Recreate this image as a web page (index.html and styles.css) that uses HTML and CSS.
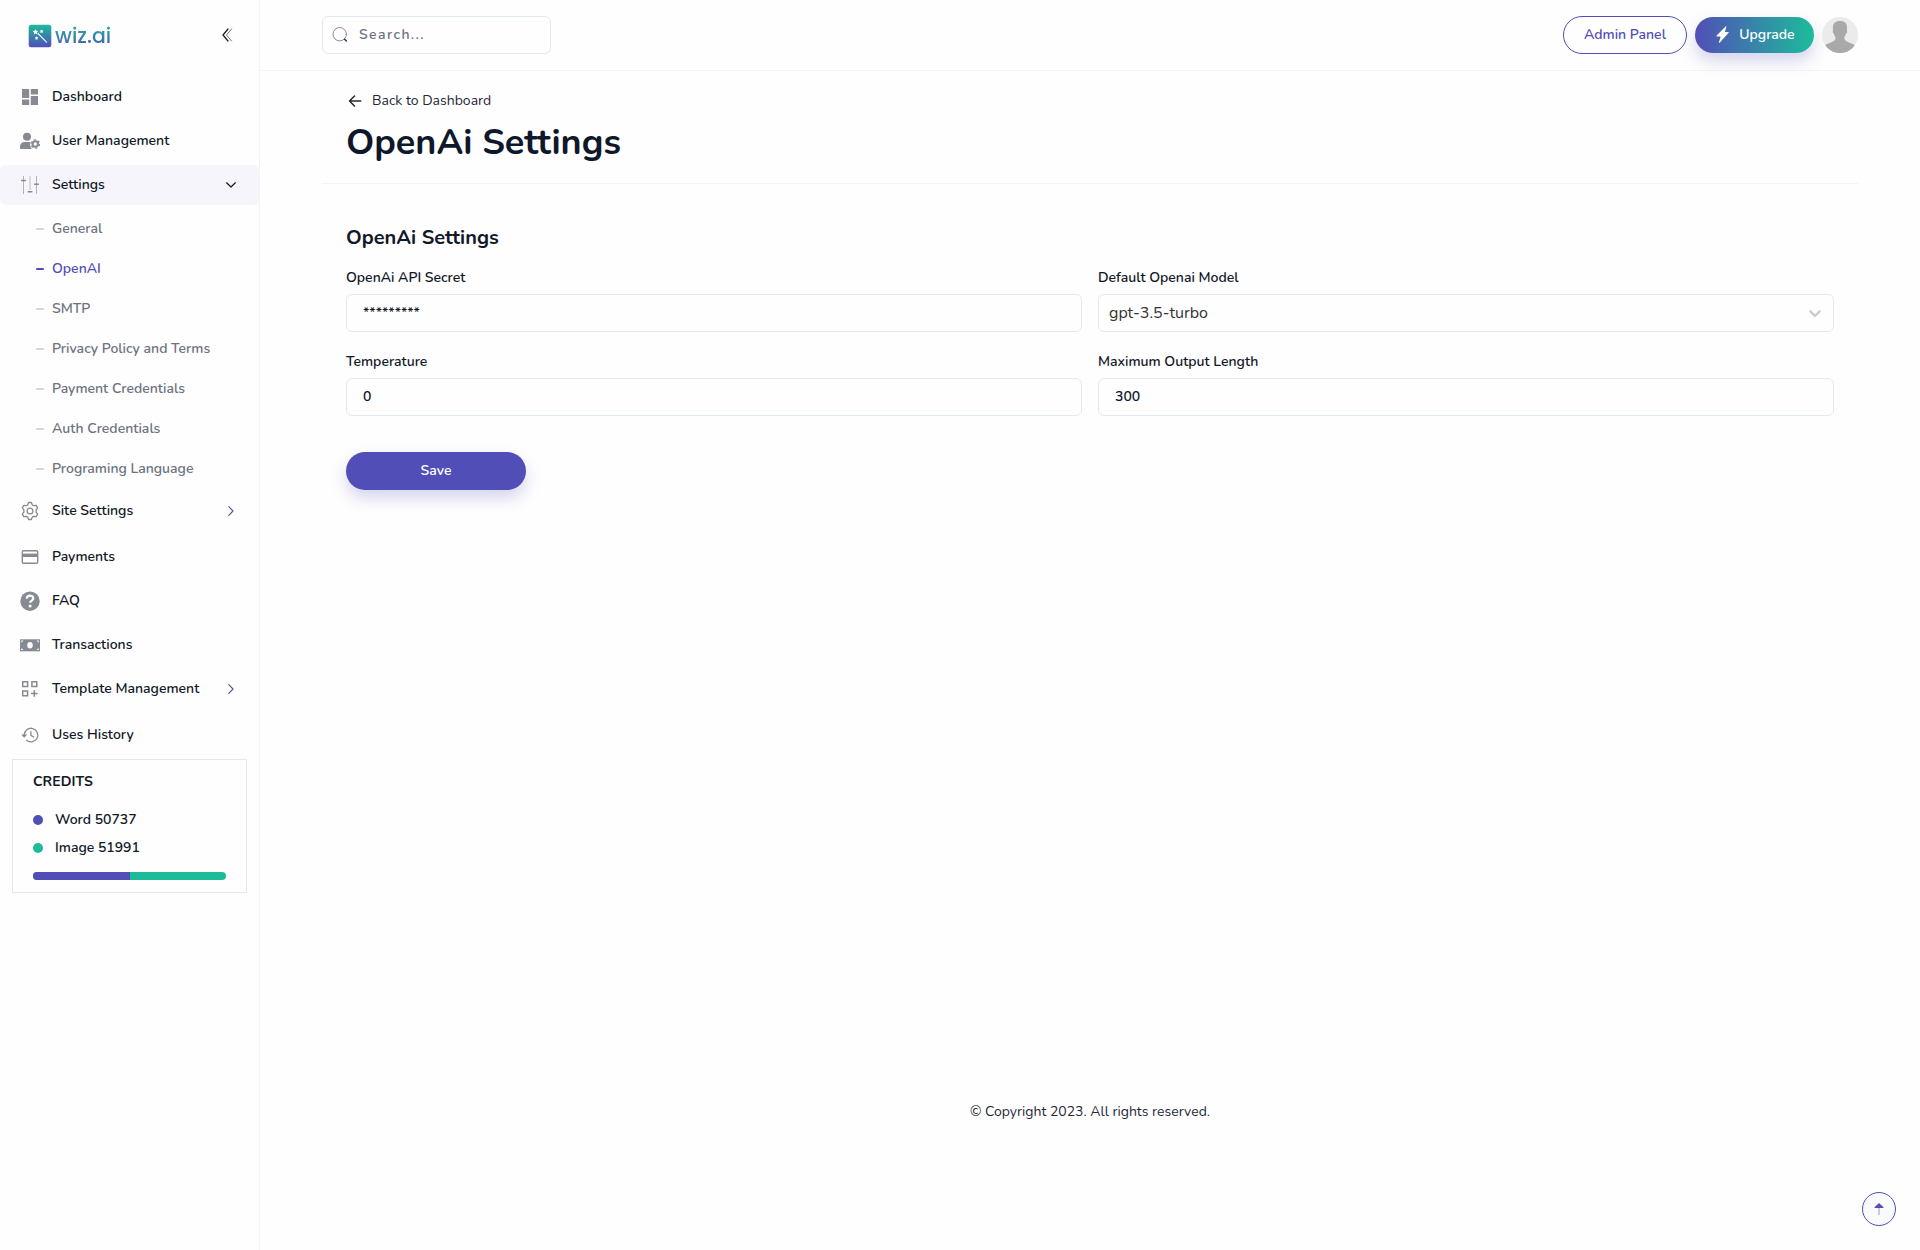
FILE: index.html
```
<!DOCTYPE html>
<html lang="en">
<head>
<meta charset="utf-8">
<title>OpenAi Settings</title>
<link rel="stylesheet" href="styles.css">
</head>
<body>
<aside class="sidebar">
  <div class="brand">
    <a class="logo">
      <svg width="24" height="24" viewBox="0 0 24 24"><defs><linearGradient id="lg" x1="0" y1="0" x2="0" y2="1"><stop offset="0" stop-color="#1cbc9b"/><stop offset="1" stop-color="#524eb7"/></linearGradient></defs><rect x=".7" y=".7" width="22.6" height="22.6" rx="2.5" fill="url(#lg)"/><path d="M10 9.5l8.500 8.700" stroke="#e6f3f5" stroke-width="1.2" stroke-linecap="round"/><path d="M7.500 5.200l.9 1.600 1.800.3-1.200 1.400.2 1.900-1.700-.8-1.700.8.2-1.900-1.200-1.400 1.800-.3zM13.600 5.400l.6 1.100 1.300.3-.9 1 .1 1.300-1.100-.5-1.200.5.1-1.300-.8-1 1.200-.3zM8.600 12.200l.6 1.100 1.200.3-.9 1 .1 1.100-1-.5-1.100.5.1-1.200-.8-.9 1.200-.3z" fill="#fff"/></svg>
      <span class="logo-text">wiz.ai</span>
    </a>
    <svg class="collapse" width="12" height="16" viewBox="0 0 12 16" fill="none" stroke-linecap="round" stroke-linejoin="round"><path d="M6 2L1 8l5 6" stroke="#111827" stroke-width="1.2"/><path d="M9.500 2l-5 6 5 6" stroke="#6b7280" stroke-width="1"/></svg>
  </div>

  <nav class="menu">
    <a class="item"><svg class="ico" viewBox="0 0 20 20" fill="currentColor"><path d="M2 2h7.200v9H2zM10.800 2H18v5.600h-7.200zM2 12.400h7.200V18H2zM10.800 9H18v9h-7.200z"/></svg>Dashboard</a>
    <a class="item"><svg class="ico" viewBox="0 0 20 20" fill="currentColor"><circle cx="7" cy="5.700" r="4"/><path d="M0 17.600v-1.800c0-3 2-4.800 4.400-4.800h4.800c.5 0 .8.1 1.200.2-.4 1.200-.7 3.800 1.400 6.800H.8c-.5 0-.8-.1-.8-.4z"/><circle cx="15.300" cy="13" r="2.700" fill="none" stroke="currentColor" stroke-width="2.100"/><circle cx="15.300" cy="13" r="4.200" fill="none" stroke="currentColor" stroke-width="1.300" stroke-dasharray="2.200 2.200"/></svg>User Management</a>
    <a class="item open"><svg class="ico" viewBox="0 0 20 20" fill="none" stroke="currentColor"><g opacity=".6"><path d="M3.500 1v18M16.500 1v18" stroke-width="1"/><path d="M10 1v14" stroke-width="1.600" opacity=".5"/></g><path d="M1.200 5.500h4.700M14.100 9.300h4.700M7.700 16.800h4.700" stroke-width="1.500"/></svg>Settings<svg class="chev" width="10" height="6" viewBox="0 0 10 6" fill="none" stroke="#111827" stroke-width="1.200" stroke-linecap="round" stroke-linejoin="round"><path d="M.6.8L5 5 9.400.8"/></svg></a>
    <div class="sub">
      <a>General</a>
      <a class="active">OpenAI</a>
      <a>SMTP</a>
      <a>Privacy Policy and Terms</a>
      <a>Payment Credentials</a>
      <a>Auth Credentials</a>
      <a>Programing Language</a>
    </div>
    <a class="item parent"><svg class="ico" viewBox="0 0 20 20" fill="none" stroke="currentColor" stroke-width="1.300" stroke-linejoin="round"><path d="M8.600 1.500h2.800l.9 2.400 1.400.8 2.500-.4 1.500 2.500-1.600 2v2.400l1.600 2-1.500 2.500-2.500-.4-1.400.8-.9 2.400H8.600l-.9-2.400-1.400-.8-2.500.4-1.500-2.500 1.600-2V8.800l-1.600-2 1.500-2.500 2.500.4 1.400-.8z"/><circle cx="10" cy="10" r="2.900"/></svg>Site Settings<svg class="chev side" width="6" height="10" viewBox="0 0 6 10" fill="none" stroke="#475a8c" stroke-width="1.100" stroke-linecap="round" stroke-linejoin="round"><path d="M.8.6L5 5 .8 9.400"/></svg></a>
    <a class="item"><svg class="ico" viewBox="0 0 20 20"><rect x="2.300" y="3.800" width="15.400" height="12.400" rx="1.200" fill="none" stroke="currentColor" stroke-width="1.400"/><path d="M2 6.600h16v3.400H2z" fill="currentColor"/></svg>Payments</a>
    <a class="item"><svg class="ico" viewBox="0 0 20 20"><circle cx="10" cy="10.200" r="9.700" fill="currentColor"/><path d="M6.700 7.600c.2-1.900 1.500-2.900 3.400-2.900s3.200 1.100 3.200 2.700c0 2.100-3.200 2.200-3.200 4.400" fill="none" stroke="#fff" stroke-width="2.200"/><circle cx="10.100" cy="15" r="1.500" fill="#fff"/></svg>FAQ</a>
    <a class="item"><svg class="ico" viewBox="0 0 20 20"><path d="M0 4.300h20v12H0z" fill="currentColor"/><ellipse cx="10" cy="10.300" rx="2.700" ry="3.200" fill="#fff"/><path d="M1.300 7.700V5.600h2.200zM18.700 7.700V5.600h-2.200zM1.300 12.900V15h2.200zM18.700 12.900V15h-2.200z" fill="#fff"/></svg>Transactions</a>
    <a class="item"><svg class="ico" viewBox="0 0 20 20" fill="none" stroke="currentColor" stroke-width="1.500"><path d="M2.700 2.700h4.900v4.900H2.700zM11.900 2.700h4.900v4.900h-4.900zM2.700 11.900h4.900v4.900H2.700zM14.300 11.200v6.600M11 14.500h6.600"/></svg>Template Management<svg class="chev side" width="6" height="10" viewBox="0 0 6 10" fill="none" stroke="#475a8c" stroke-width="1.100" stroke-linecap="round" stroke-linejoin="round"><path d="M.8.6L5 5 .8 9.400"/></svg></a>
    <a class="item history"><svg class="ico" viewBox="0 0 20 20" fill="none" stroke="currentColor" stroke-width="1.300"><path d="M4.200 10.100a6.800 6.800 0 1 1 2 4.800"/><path d="M10.900 6.300v4l3.200 2"/><path d="M1.200 9.500h6l-3 3.300z" fill="currentColor" stroke="none"/></svg>Uses History</a>
  </nav>

  <section class="credits">
    <h4>CREDITS</h4>
    <p><i class="dot"></i>Word 50737</p>
    <p><i class="dot green"></i>Image 51991</p>
    <div class="bar"><span></span></div>
  </section>
</aside>

<div class="page">
  <header class="topbar">
    <div class="search">
      <svg width="16" height="16" viewBox="0 0 16 16" fill="none" stroke-linecap="round"><circle cx="7.700" cy="7.200" r="6.700" stroke="#858b95" stroke-width="1"/><path d="M12.600 12.300l1.800 1.600" stroke="#1f2937" stroke-width="1.400"/></svg>
      <span>Search...</span>
    </div>
    <div class="actions">
      <a class="btn outline">Admin Panel</a>
      <a class="btn upgrade"><svg width="13" height="17" viewBox="0 0 13 17" fill="#fff"><path d="M9.800.2Q10.600 0 10.300.9L8.900 5.900h3c.9 0 1.100.6.5 1.200L3.900 16.400c-.6.500-1.200.2-.9-.5l1.700-5.300H1.200c-.8 0-1-.6-.5-1.200z"/></svg>Upgrade</a>
      <svg class="avatar" width="36" height="36" viewBox="0 0 36 36"><defs><clipPath id="av"><circle cx="18" cy="18" r="18"/></clipPath></defs><g clip-path="url(#av)"><path fill="#ebebeb" d="M0 0h36v36H0z"/><path fill="#a9a9a9" d="M18 4c4.800 0 7 2.400 7 6.500 0 1.200-.1 1.800-.1 2.700.6.6.2 2.800-.8 3.300-.4 1.500-1 2.600-1.700 3.400v1.600c0 2.500 3.600 3.400 9.900 6.200L35 36H1l2.500-8.300c6.300-2.800 9.900-3.700 9.900-6.200v-1.600c-.7-.8-1.300-1.900-1.600-3.400-1-.5-1.400-2.700-.8-3.300 0-.9-.2-1.500-.1-2.700C11 6.400 13.200 4 18 4z"/></g></svg>
    </div>
  </header>

  <main class="content">
    <div class="heading">
      <a class="back"><svg width="14" height="14" viewBox="0 0 14 14" fill="none" stroke="#1f2937" stroke-width="1.500" stroke-linecap="round" stroke-linejoin="round"><path d="M12.700 7H1.500M6.500 2L1.500 7l5 5"/></svg>Back to Dashboard</a>
      <h1>OpenAi Settings</h1>
    </div>
    <form class="settings">
      <h2>OpenAi Settings</h2>
      <div class="grid">
        <label>OpenAi API Secret<span class="field">*********</span></label>
        <label>Default Openai Model<span class="field select">gpt-3.5-turbo<svg width="20" height="20" viewBox="0 0 20 20" fill="#ccc"><path d="M4.516 7.548c0.436-0.446 1.043-0.481 1.576 0l3.908 3.747 3.908-3.747c0.533-0.481 1.141-0.446 1.574 0 0.436 0.445 0.408 1.197 0 1.615-0.406 0.418-4.695 4.502-4.695 4.502-0.217 0.223-0.502 0.335-0.787 0.335s-0.570-0.112-0.789-0.335c0 0-4.287-4.084-4.695-4.502s-0.436-1.170 0-1.615z"/></svg></span></label>
        <label>Temperature<span class="field">0</span></label>
        <label>Maximum Output Length<span class="field">300</span></label>
      </div>
      <a class="btn save">Save</a>
    </form>
  </main>

  <footer>© Copyright 2023. All rights reserved.</footer>
</div>

<a class="to-top"><svg width="10" height="12" viewBox="0 0 10 12"><path d="M4 5h2v7H4z" fill="#c9c8e8"/><path d="M5 0l4.500 4.200q.3.800-.5.800H1Q.2 5 .5 4.200z" fill="#524eb7"/></svg></a>
</body>
</html>
```
FILE: styles.css
```
* { box-sizing: border-box; }
body {
  margin: 0;
  display: flex;
  height: 1250px;
  overflow: hidden;
  background: #fefefe;
  color: #111827;
  font: 600 14px/20px Nunito, Lato, "Open Sans", sans-serif;
}
h1, h2, h4, p { margin: 0; }

/* Sidebar */
.sidebar { width: 260px; flex: none; border-right: 1px solid #f3f4f6; }
.brand { height: 70px; display: flex; align-items: center; justify-content: space-between; padding: 2px 25px 0 28px; }
.logo { display: flex; align-items: center; gap: 3px; }
.logo-text {
  font: 500 20.5px/28px Poppins, Nunito, sans-serif;
  background: linear-gradient(#1cbc9b, #524eb7);
  -webkit-background-clip: text;
  background-clip: text;
  color: transparent;
}
.collapse { margin-bottom: 2px; }
.menu { display: flex; flex-direction: column; gap: 4px; padding-top: 6px; }
.item { display: flex; align-items: center; height: 40px; padding: 2px 23px 0 20px; gap: 12px; border-radius: 6px; }
.ico { width: 20px; height: 20px; flex: none; color: #858a93; }
.chev { margin-left: auto; }
.chev.side { margin-right: 2px; }
.item.open { background: #f5f5fb; margin-top: 1px; padding-top: 0; }
.sub { display: flex; flex-direction: column; margin-top: -1px; color: #6b7280; }
.sub a { display: flex; align-items: center; height: 40px; gap: 8px; padding: 2px 0 0 36px; }
.sub a::before { content: ""; width: 8px; height: 2px; border-radius: 1px; background: #d1d5db; }
.sub .active { color: #524eb7; }
.sub .active::before { background: #524eb7; }
.item.parent { margin: -1px 0 1px; padding-top: 0; }
.item.history { margin-top: 2px; }
.credits { margin: 5px 12px 0; height: 134px; padding: 12px 20px; border: 1px solid #e5e7eb; }
.credits h4 { font-weight: 700; letter-spacing: .1px; margin-bottom: 14px; }
.credits p { display: flex; align-items: center; height: 28px; gap: 12px; }
.dot { width: 10px; height: 10px; border-radius: 50%; background: #524eb7; }
.dot.green { background: #1cbc9b; }
.bar { height: 8px; margin-top: 10px; border-radius: 4px; overflow: hidden; background: #1cbc9b; }
.bar span { display: block; width: 97px; height: 8px; background: #524eb7; }

/* Main column */
.page { flex: 1; display: flex; flex-direction: column; }
.topbar { height: 71px; flex: none; display: flex; align-items: center; justify-content: space-between; padding: 0 62px; border-bottom: 1px solid #f3f4f6; }
.search { display: flex; align-items: center; gap: 11px; width: 229px; height: 38px; padding: 0 9px; border: 1px solid #e2e8f0; border-radius: 6px; color: #6b7280; letter-spacing: 1.4px; }
.actions { display: flex; align-items: center; gap: 8px; }
.btn { display: flex; align-items: center; justify-content: center; border-radius: 19px; }
.outline { width: 124px; height: 38px; padding-bottom: 1px; border: 1px solid #524eb7; color: #524eb7; }
.upgrade { width: 119px; height: 36px; gap: 10px; padding: 0 0 1px 2px; color: #fff; background: linear-gradient(90deg, #524eb7, #1cbc9b); box-shadow: 0 8px 16px rgba(82, 78, 183, .24); }
.content { padding: 0 62px; }
.heading { height: 113px; padding: 20px 24px 0; border-bottom: 1px solid #f3f4f6; }
.back { display: flex; align-items: center; gap: 10px; padding-left: 2px; font-weight: 400; color: #1f2937; }
h1 { font-size: 36px; line-height: 44px; font-weight: 700; margin-top: 10px; color: #0f172a; }
.settings { padding: 40px 24px 0; }
h2 { font-size: 20px; line-height: 28px; font-weight: 700; }
.grid { display: grid; grid-template-columns: 1fr 1fr; gap: 20px 16px; margin-top: 16px; }
label { display: flex; flex-direction: column; gap: 7px; line-height: 19px; }
.field { display: flex; align-items: center; height: 38px; padding: 0 8px 2px 16px; border: 1px solid #e2e8f0; border-radius: 6px; }
.field.select { justify-content: space-between; padding: 0 8px 0 10px; font-size: 16px; font-weight: 400; color: #333; }
.save { width: 180px; height: 38px; margin-top: 36px; color: #fff; background: #524eb7; box-shadow: 0 8px 16px rgba(82, 78, 183, .24); }
footer { margin-top: auto; padding-bottom: 128px; text-align: center; font-weight: 400; color: #1f2937; }

/* Floating scroll button */
.to-top { position: fixed; right: 24px; bottom: 24px; width: 34px; height: 34px; display: flex; align-items: center; justify-content: center; border: 1px solid #524eb7; border-radius: 50%; background: #f9fafb; }
```
